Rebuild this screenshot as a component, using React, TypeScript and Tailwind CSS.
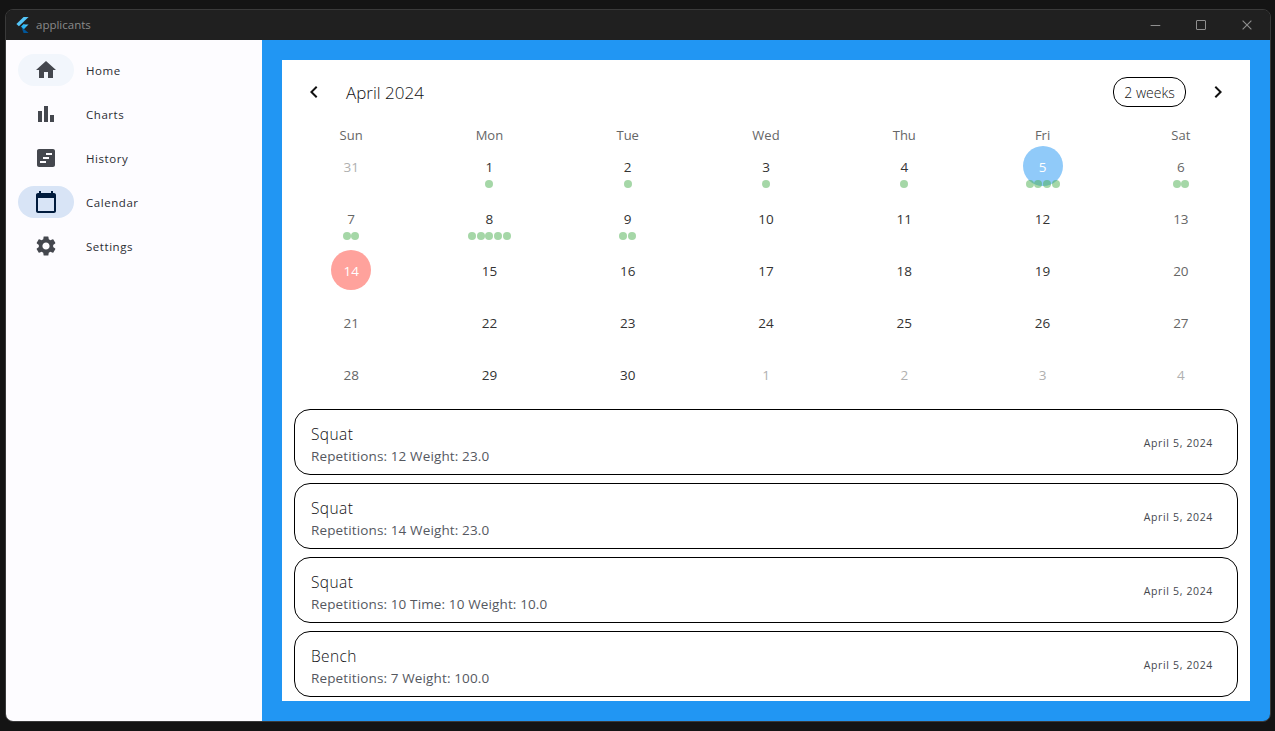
import { MdHome, MdBarChart, MdSettings, MdChevronLeft, MdChevronRight } from 'react-icons/md'
import { VscChromeMinimize, VscChromeClose } from 'react-icons/vsc'
import type { ReactNode } from 'react'

const font = 'font-["Open_Sans",sans-serif]'

const HistoryIcon = () => (
  <svg width="24" height="24" viewBox="0 0 24 24" fill="currentColor">
    <path d="M19 3H5c-1.1 0-2 .9-2 2v14c0 1.1.9 2 2 2h14c1.1 0 2-.9 2-2V5c0-1.1-.9-2-2-2zM6 17v-2h6v2H6zm3-4v-2h6v2H9zm3-4V7h6v2h-6z" fillRule="evenodd" />
  </svg>
)

const CalendarIcon = () => (
  <svg width="24" height="24" viewBox="0 0 24 24" fill="currentColor">
    <path d="M20 3h-1V1h-2v2H7V1H5v2H4c-1.1 0-2 .9-2 2v16c0 1.1.9 2 2 2h16c1.1 0 2-.9 2-2V5c0-1.1-.9-2-2-2zm0 18H4V8h16v13z" />
  </svg>
)

const FlutterLogo = () => (
  <svg width="14" height="16" viewBox="0 0 14 16">
    <path d="M8.6 0H13.6L3.9 9.2 1.4 6.9z" fill="#54c5f8" />
    <path d="M8.6 7.4H13.6L8.9 11.8 6.4 9.5z" fill="#54c5f8" />
    <path d="M6.2 9.6 8.9 11.9 13.6 16H8.6z" fill="#01579b" />
    <path d="M6.2 9.6 8.9 7.1 11.3 9.5 8.9 11.9z" fill="#29b6f6" />
  </svg>
)

const navItems: { label: string; icon: ReactNode; pill?: string; color: string }[] = [
  { label: 'Home', icon: <MdHome size={24} />, pill: 'bg-[#f2f6fc]', color: 'text-[#44474e]' },
  { label: 'Charts', icon: <MdBarChart size={24} />, color: 'text-[#44474e]' },
  { label: 'History', icon: <HistoryIcon />, color: 'text-[#44474e]' },
  { label: 'Calendar', icon: <CalendarIcon />, pill: 'bg-[#d8e4f6]', color: 'text-[#001b3d]' },
  { label: 'Settings', icon: <MdSettings size={24} />, color: 'text-[#44474e]' },
]

const days = ['Sun', 'Mon', 'Tue', 'Wed', 'Thu', 'Fri', 'Sat']

type Cell = { n: number; muted?: boolean; dots?: number; circle?: string }

const weeks: Cell[][] = [
  [{ n: 31, muted: true }, { n: 1, dots: 1 }, { n: 2, dots: 1 }, { n: 3, dots: 1 }, { n: 4, dots: 1 }, { n: 5, dots: 4, circle: 'bg-[#90caf9]' }, { n: 6, dots: 2 }],
  [{ n: 7, dots: 2 }, { n: 8, dots: 5 }, { n: 9, dots: 2 }, { n: 10 }, { n: 11 }, { n: 12 }, { n: 13 }],
  [{ n: 14, circle: 'bg-[#ffa29c]' }, { n: 15 }, { n: 16 }, { n: 17 }, { n: 18 }, { n: 19 }, { n: 20 }],
  [{ n: 21 }, { n: 22 }, { n: 23 }, { n: 24 }, { n: 25 }, { n: 26 }, { n: 27 }],
  [{ n: 28 }, { n: 29 }, { n: 30 }, { n: 1, muted: true }, { n: 2, muted: true }, { n: 3, muted: true }, { n: 4, muted: true }],
]

const entries = [
  { name: 'Squat', detail: 'Repetitions: 12 Weight: 23.0' },
  { name: 'Squat', detail: 'Repetitions: 14 Weight: 23.0' },
  { name: 'Squat', detail: 'Repetitions: 10 Time: 10 Weight: 10.0' },
  { name: 'Bench', detail: 'Repetitions: 7 Weight: 100.0' },
]

function DayCell({ cell, col }: { cell: Cell; col: number }) {
  const weekend = col === 0 || col === 6
  const color = cell.circle
    ? 'text-white'
    : cell.muted
      ? 'text-[#b0b0b0]'
      : weekend
        ? 'text-[#666666]'
        : 'text-[#333333]'
  return (
    <div className="relative h-[52px] flex justify-center">
      {cell.circle && <span className={`absolute top-[5px] w-10 h-10 rounded-full ${cell.circle}`} />}
      <span className={`relative mt-[16px] h-5 leading-5 text-[13.5px] ${color}`}>{cell.n}</span>
      {cell.dots && (
        <div className="absolute top-[39px] flex gap-[0.7px]">
          {Array.from({ length: cell.dots }).map((_, i) => (
            <span key={i} className="w-2 h-2 rounded-full bg-[#4caf50]/50" />
          ))}
        </div>
      )}
    </div>
  )
}

export default function App() {
  return (
    <div className={`w-[1275px] h-[731px] bg-[#141414] pt-[9px] pl-[5px] overflow-hidden ${font}`}>
      <div className="w-[1266px] h-[713px] flex flex-col rounded-lg overflow-hidden border border-[#3a3a3a]">
        <div className="h-[30px] shrink-0 bg-[#202020] flex items-center pl-[9px]">
          <FlutterLogo />
          <span className="ml-[7px] text-[11.5px] text-[#8a8a8a]">applicants</span>
          <div className="ml-auto flex items-center text-[#8f8f8f]">
            <div className="w-[46px] flex justify-center"><VscChromeMinimize size={14} /></div>
            <div className="w-[46px] flex justify-center">
              <span className="w-[10px] h-[10px] rounded-[1px] border border-[#8f8f8f]" />
            </div>
            <div className="w-[46px] flex justify-center"><VscChromeClose size={14} /></div>
          </div>
        </div>
        <div className="flex-1 flex min-h-0">
          <nav className="w-[256px] shrink-0 bg-[#fdfcff] pt-[8px] pl-3 flex flex-col">
            {navItems.map(item => (
              <div key={item.label} className="h-11 flex items-center">
                <div className={`w-14 h-8 rounded-2xl flex items-center justify-center ${item.pill ?? ''} ${item.color}`}>
                  {item.icon}
                </div>
                <span className="ml-3 pt-[2px] text-[11.5px] font-medium tracking-[0.55px] text-[#2b2d33]">{item.label}</span>
              </div>
            ))}
          </nav>
          <main className="flex-1 bg-[#2196f3] p-5 min-w-0">
            <div className="h-full bg-white flex flex-col overflow-hidden">
              <header className="h-[64px] shrink-0 flex items-center px-5">
                <MdChevronLeft size={24} className="text-[#111]" />
                <span className="ml-[20px] pt-[2px] text-[17px] font-light text-[#111114]">April 2024</span>
                <span className="ml-auto h-[30px] w-[73px] flex items-center justify-center rounded-[14px] border border-black text-[14px] font-light text-[#111]">2 weeks</span>
                <MdChevronRight size={24} className="ml-5 text-[#111]" />
              </header>
              <div className="grid grid-cols-7 h-4 mt-[1px]">
                {days.map(d => (
                  <div key={d} className="text-center text-[13px] leading-[20px] text-[#666]">{d}</div>
                ))}
              </div>
              <div className="grid grid-cols-7">
                {weeks.flatMap((week, w) =>
                  week.map((cell, col) => <DayCell key={`${w}-${col}`} cell={cell} col={col} />)
                )}
              </div>
              <div className="px-3 mt-[8px] flex flex-col gap-2">
                {entries.map((e, i) => (
                  <div key={i} className="h-[66px] shrink-0 rounded-2xl border border-black flex items-center pl-4 pr-6">
                    <div className="flex-1 pt-[7px]">
                      <div className="text-[15.5px] leading-5 font-light text-[#111114] tracking-[0.4px] -mt-[1px]">{e.name}</div>
                      <div className="text-[13.5px] leading-5 mt-[2px] text-[#55585f] tracking-[0.13px]">{e.detail}</div>
                    </div>
                    <span className="pt-[3px] text-[10.5px] tracking-[0.65px] text-[#44474e]">April 5, 2024</span>
                  </div>
                ))}
              </div>
            </div>
          </main>
        </div>
      </div>
    </div>
  )
}
